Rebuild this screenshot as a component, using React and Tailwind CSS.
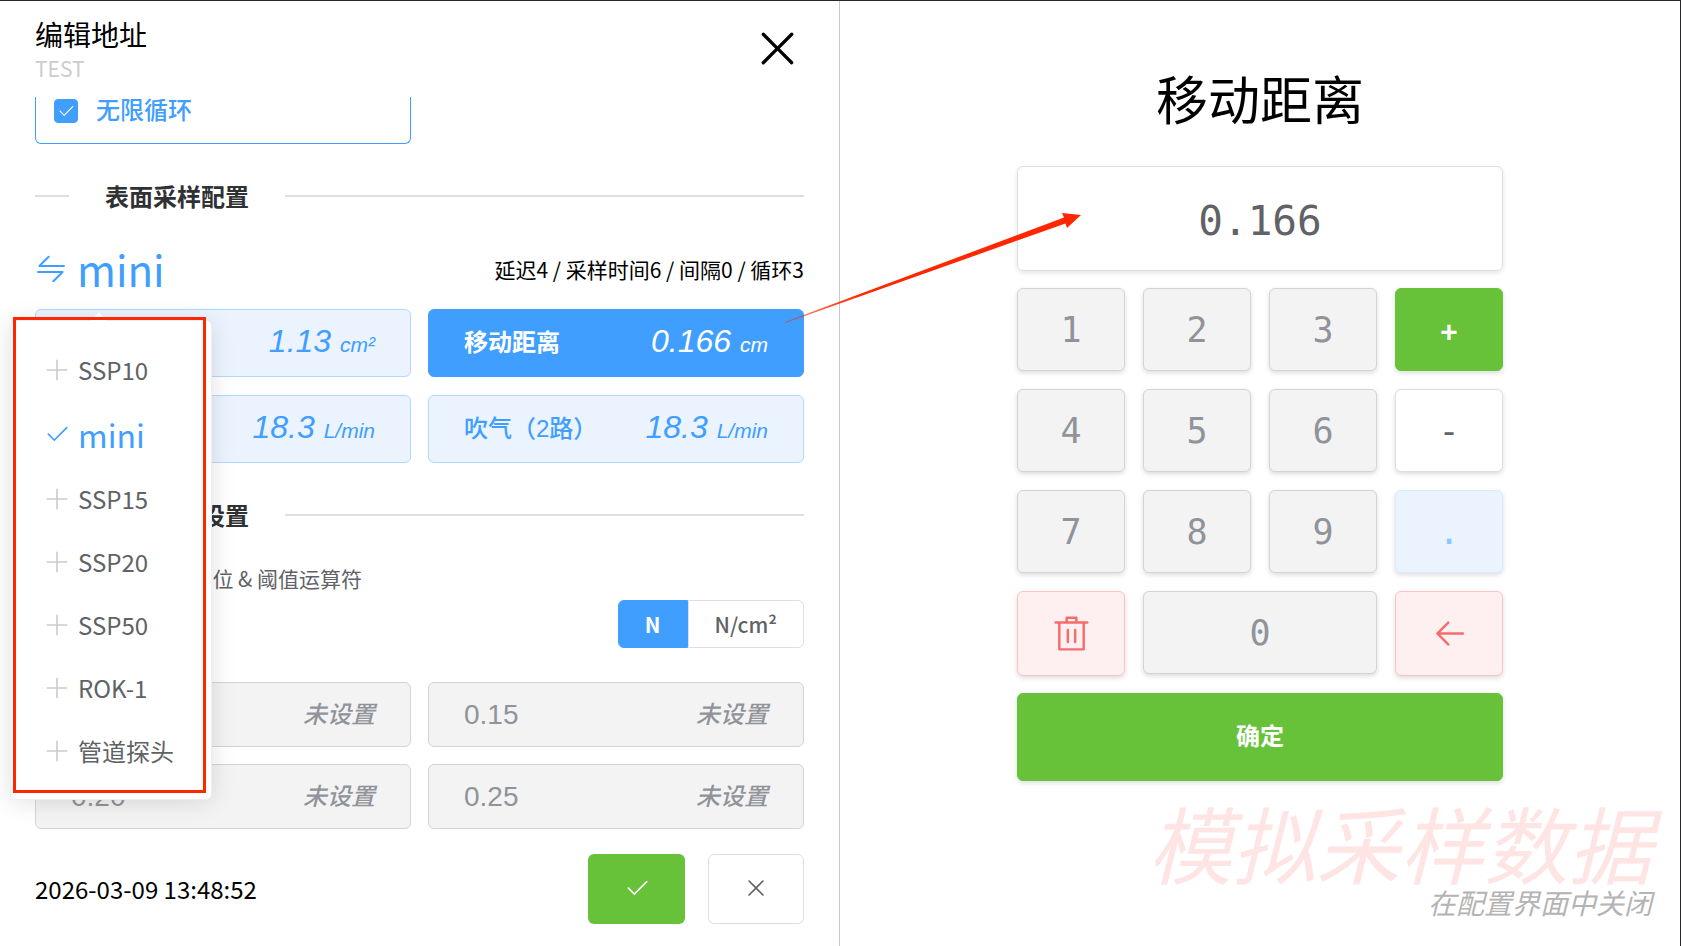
import { useState } from 'react';
import clsx from 'clsx';

const ICONS = {
    plus: 'M480 480V128a32 32 0 0 1 64 0v352h352a32 32 0 1 1 0 64H544v352a32 32 0 1 1-64 0V544H128a32 32 0 0 1 0-64z',
    check: 'M406.656 706.944 195.84 496.256a32 32 0 1 0-45.248 45.248l256 256 512-512a32 32 0 0 0-45.248-45.248L406.592 706.944z',
    close: 'M764.288 214.592 512 466.88 259.712 214.592a31.936 31.936 0 0 0-45.12 45.12L466.752 512 214.528 764.224a31.936 31.936 0 1 0 45.12 45.184L512 557.184l252.288 252.288a31.936 31.936 0 0 0 45.12-45.12L557.12 512.064l252.288-252.352a31.936 31.936 0 1 0-45.12-45.184z',
    back: 'M224 480h640a32 32 0 1 1 0 64H224a32 32 0 0 1 0-64z M237.248 512l265.408 265.344a32 32 0 0 1-45.312 45.312l-288-288a32 32 0 0 1 0-45.312l288-288a32 32 0 1 1 45.312 45.312L237.248 512z',
    trash: 'M160 256H96a32 32 0 0 1 0-64h256V95.936a32 32 0 0 1 32-32h256a32 32 0 0 1 32 32V192h256a32 32 0 1 1 0 64h-64v672a32 32 0 0 1-32 32H192a32 32 0 0 1-32-32V256zm448-64v-64H416v64h192zM224 896h576V256H224v640zm192-128a32 32 0 0 1-32-32V416a32 32 0 0 1 64 0v320a32 32 0 0 1-32 32zm192 0a32 32 0 0 1-32-32V416a32 32 0 0 1 64 0v320a32 32 0 0 1-32 32z',
    swap: 'M118.656 438.656a32 32 0 0 1 0-45.248L416 96l4.48-3.776A32 32 0 0 1 461.248 96l3.712 4.48a32.064 32.064 0 0 1-3.712 40.832L218.56 384H928a32 32 0 1 1 0 64H141.248a32 32 0 0 1-22.592-9.344zM64 608a32 32 0 0 1 32-32h786.752a32 32 0 0 1 22.656 54.592L608 928l-4.48 3.776a32.064 32.064 0 0 1-40.832-49.024L805.632 640H96a32 32 0 0 1-32-32z',
};

const PROBES = ['SSP10', 'mini', 'SSP15', 'SSP20', 'SSP50', 'ROK-1', '管道探头'];

const PARAMS = [
    { label: '采样面积', value: '1.13', unit: 'cm²' },
    { label: '移动距离', value: '0.166', unit: 'cm' },
    { label: '吹气（1路）', value: '18.3', unit: 'L/min' },
    { label: '吹气（2路）', value: '18.3', unit: 'L/min' },
];

const THRESHOLDS = ['0.10', '0.15', '0.20', '0.25'];

function Icon({ name, className }) {
    return (
        <svg viewBox="0 0 1024 1024" fill="currentColor" aria-hidden="true" className={clsx('shrink-0', className)}>
            <path d={ICONS[name]} />
        </svg>
    );
}

function Divider({ children }) {
    return (
        <div className="mt-[34px] flex h-9 items-center gap-9">
            <span className="h-[2px] w-[34px] bg-[#dcdfe6]" />
            <h2 className="text-[24px] leading-9 font-bold text-[#303133]">{children}</h2>
            <span className="h-[2px] flex-1 bg-[#dcdfe6]" />
        </div>
    );
}

function ProbeMenu({ value, onChange }) {
    return (
        <div className="absolute top-[81px] -left-[25px] z-10 w-[202px] rounded-md border border-[#ebeef5] bg-white py-[17px] shadow-[0_2px_24px_rgba(0,0,0,0.12)]">
            <span className="absolute -top-[6px] left-[82px] h-3 w-3 rotate-45 bg-white" />
            <ul className="relative">
                {PROBES.map((probe) => (
                    <li key={probe}>
                        <button
                            type="button"
                            onClick={() => onChange(probe)}
                            className={clsx(
                                'flex w-full items-center gap-2 pl-[33px]',
                                probe === value
                                    ? 'h-[66px] text-[32px] leading-[48px] text-[#409eff]'
                                    : 'h-[63px] text-[24px] leading-9 text-[#606266]'
                            )}
                        >
                            <Icon
                                name={probe === value ? 'check' : 'plus'}
                                className={clsx('h-[26px] w-[26px]', probe !== value && 'text-[#cccccc]')}
                            />
                            {probe}
                        </button>
                    </li>
                ))}
            </ul>
            {/* Highlight frame */}
            <span className="pointer-events-none absolute -top-1 right-[5px] bottom-[6px] left-[2px] border-[3px] border-[#ff2600]" />
        </div>
    );
}

function Key({ children, className, ...props }) {
    return (
        <button
            type="button"
            className={clsx(
                'flex items-center justify-center rounded-md border shadow-[0_2px_5px_rgba(0,0,0,0.14)]',
                className
            )}
            {...props}
        >
            {children}
        </button>
    );
}

const digitKey = 'h-[83px] border-[#d3d4d6] bg-[#f3f3f4] text-[#909399]';

export default function App() {
    const [probe, setProbe] = useState('mini');
    const [active, setActive] = useState('移动距离');
    const [unit, setUnit] = useState('N');
    const [entry, setEntry] = useState('0.166');

    const press = (char) => setEntry((prev) => prev + char);

    return (
        <div className="relative flex min-h-screen overflow-hidden border-t border-r border-[#27272a] bg-white font-['Noto_Sans_CJK_SC',sans-serif] text-black">
            <section className="w-1/2 border-r border-[#c8c9cc] px-[35px]">
                <header className="flex h-24 items-center justify-between">
                    <div className="pt-[2px]">
                        <h1 className="text-[28px] leading-9">编辑地址</h1>
                        <p className="text-[21px] leading-8 text-[#cccccc]">TEST</p>
                    </div>
                    <button type="button" aria-label="关闭" className="pb-[2px]">
                        <Icon name="close" className="h-[53px] w-[53px]" />
                    </button>
                </header>

                <div className="grid grid-cols-2 gap-x-[17px]">
                    <label className="flex h-[47px] items-start gap-[18px] rounded-b-md border border-t-0 border-[#409eff] px-[18px] pt-[2px] text-[24px] leading-5 font-medium text-[#409eff]">
                        <span className="relative flex h-6 w-6">
                            <input
                                type="checkbox"
                                defaultChecked
                                className="peer h-6 w-6 appearance-none rounded-sm border border-[#409eff] checked:bg-[#409eff]"
                            />
                            <Icon name="check" className="pointer-events-none absolute top-[3px] left-[3px] h-[18px] w-[18px] text-white" />
                        </span>
                        无限循环
                    </label>
                </div>

                <Divider>表面采样配置</Divider>

                <div className="relative mt-[25px] mb-[10px] flex items-center justify-between">
                    <button type="button" className="flex items-center gap-[10px] text-[42px] leading-[60px] text-[#409eff]">
                        <Icon name="swap" className="h-8 w-8" />
                        {probe}
                    </button>
                    <p className="text-[21px] leading-8">延迟4 / 采样时间6 / 间隔0 / 循环3</p>
                    <ProbeMenu value={probe} onChange={setProbe} />
                </div>

                <div className="grid grid-cols-2 gap-x-[17px] gap-y-[18px] font-['Liberation_Sans','Noto_Sans_CJK_SC',sans-serif]">
                    {PARAMS.map((param) => (
                        <button
                            key={param.label}
                            type="button"
                            onClick={() => setActive(param.label)}
                            className={clsx(
                                'flex h-[68px] items-center justify-between rounded-md border px-[35px] text-[24px] leading-9',
                                param.label === active
                                    ? 'border-[#409eff] bg-[#409eff] font-bold text-white'
                                    : 'border-[#b3d8ff] bg-[#ebf3ff] font-medium text-[#409eff]'
                            )}
                        >
                            <span>{param.label}</span>
                            <span className="text-[32px] font-medium italic">
                                {param.value} <span className="text-[21px]">{param.unit}</span>
                            </span>
                        </button>
                    ))}
                </div>

                <Divider>压力阈值设置</Divider>

                <p className="mt-[29px] text-[21px] leading-8 text-[#606266]">选择 压力阈值的 单位 &amp; 阈值运算符</p>

                <div className="mt-[6px] flex justify-end text-[21px]">
                    {['N', 'N/cm²'].map((name) => (
                        <button
                            key={name}
                            type="button"
                            onClick={() => setUnit(name)}
                            className={clsx(
                                'h-12 border px-[26px] leading-8 first:rounded-l-md last:rounded-r-md',
                                name === unit
                                    ? 'border-[#409eff] bg-[#409eff] font-bold text-white'
                                    : 'border-[#dcdfe6] bg-white font-medium text-[#606266]'
                            )}
                        >
                            {name}
                        </button>
                    ))}
                </div>

                <div className="mt-[34px] grid grid-cols-2 gap-[17px] font-['Liberation_Sans','Noto_Sans_CJK_SC',sans-serif]">
                    {THRESHOLDS.map((threshold) => (
                        <button
                            key={threshold}
                            type="button"
                            className="flex h-[65px] items-center justify-between rounded-md border border-[#d3d4d6] bg-[#f3f3f4] px-[35px] text-[28px] leading-9 font-medium text-[#909399]"
                        >
                            <span>{threshold}</span>
                            <span className="text-[24px] italic">未设置</span>
                        </button>
                    ))}
                </div>

                <footer className="mt-[25px] flex items-center">
                    <time className="flex-1 text-[24px] leading-9">2026-03-09 13:48:52</time>
                    <button
                        type="button"
                        aria-label="保存"
                        className="flex h-[70px] w-[97px] items-center justify-center rounded-md bg-[#67c23a] pb-[2px] text-white"
                    >
                        <Icon name="check" className="h-[26px] w-[26px]" />
                    </button>
                    <button
                        type="button"
                        aria-label="取消"
                        className="ml-[23px] flex h-[70px] w-[96px] items-center justify-center rounded-md border border-[#dcdfe6] pb-[2px] text-[#606266]"
                    >
                        <Icon name="close" className="h-[26px] w-[26px]" />
                    </button>
                </footer>
            </section>

            <section className="flex w-1/2 flex-col pt-[61px]">
                <div className="mx-auto w-[486px]">
                    <h2 className="text-center text-[52px] leading-[72px]">
                        <label htmlFor="entry">{active}</label>
                    </h2>
                    <input
                        id="entry"
                        type="text"
                        value={entry}
                        onChange={(e) => setEntry(e.target.value)}
                        className="mt-8 h-[105px] w-full rounded-md border border-[#dcdfe6] pt-1 text-center font-['DejaVu_Sans_Mono',monospace] text-[41px] text-[#606266] shadow-[0_2px_5px_rgba(0,0,0,0.1)] outline-none"
                    />

                    <div className="mt-[17px] grid grid-cols-4 items-start gap-[18px] font-['DejaVu_Sans_Mono',monospace] text-[35px] leading-10">
                        {['1', '2', '3'].map((n) => (
                            <Key key={n} onClick={() => press(n)} className={digitKey}>{n}</Key>
                        ))}
                        <Key onClick={() => press('+')} className="h-[83px] border-[#67c23a] bg-[#67c23a] pt-1 text-[28px] font-bold text-white">+</Key>
                        {['4', '5', '6'].map((n) => (
                            <Key key={n} onClick={() => press(n)} className={digitKey}>{n}</Key>
                        ))}
                        <Key onClick={() => press('-')} className="h-[83px] border-[#dcdfe6] bg-white text-[#606266]">-</Key>
                        {['7', '8', '9'].map((n) => (
                            <Key key={n} onClick={() => press(n)} className={digitKey}>{n}</Key>
                        ))}
                        <Key disabled className="h-[83px] border-[#d9ecff] bg-[#ebf3ff] text-[#8cc5ff]">.</Key>
                        <Key
                            aria-label="清空"
                            onClick={() => setEntry('')}
                            className="h-[85px] border-[#fbc4c4] bg-[#fef0f0] text-[#f56c6c]"
                        >
                            <Icon name="trash" className="h-[39px] w-[39px]" />
                        </Key>
                        <Key onClick={() => press('0')} className={clsx(digitKey, 'col-span-2')}>0</Key>
                        <Key
                            aria-label="退格"
                            onClick={() => setEntry((prev) => prev.slice(0, -1))}
                            className="h-[85px] border-[#fbc4c4] bg-[#fef0f0] text-[#f56c6c]"
                        >
                            <Icon name="back" className="h-[39px] w-[39px]" />
                        </Key>
                    </div>

                    <Key className="mt-[17px] h-[88px] w-full border-[#67c23a] bg-[#67c23a] pb-1 text-[24px] leading-9 font-bold text-white">
                        确定
                    </Key>
                </div>

                <div className="mt-auto pr-7 pb-[26px] text-right italic">
                    <p className="text-[84px] leading-[84px] text-[#ffe4e4]">模拟采样数据</p>
                    <p className="text-[28px] leading-9 text-[#b4b4b4]">在配置界面中关闭</p>
                </div>
            </section>

            {/* Pointer from the selected parameter to the number box */}
            <svg
                viewBox="0 0 296 112"
                aria-hidden="true"
                className="pointer-events-none absolute top-[210px] left-[785px] z-20 h-[112px] w-[296px]"
            >
                <defs>
                    <linearGradient id="tail" x1="0" x2="1" y1="0" y2="0">
                        <stop offset="0" stopColor="#ff2600" stopOpacity="0.5" />
                        <stop offset="0.25" stopColor="#ff2600" />
                    </linearGradient>
                </defs>
                <path d="M0 111 279 6.5 277 2 296 4 282 17 280.5 12.5 0 112Z" fill="url(#tail)" />
            </svg>
        </div>
    );
}
